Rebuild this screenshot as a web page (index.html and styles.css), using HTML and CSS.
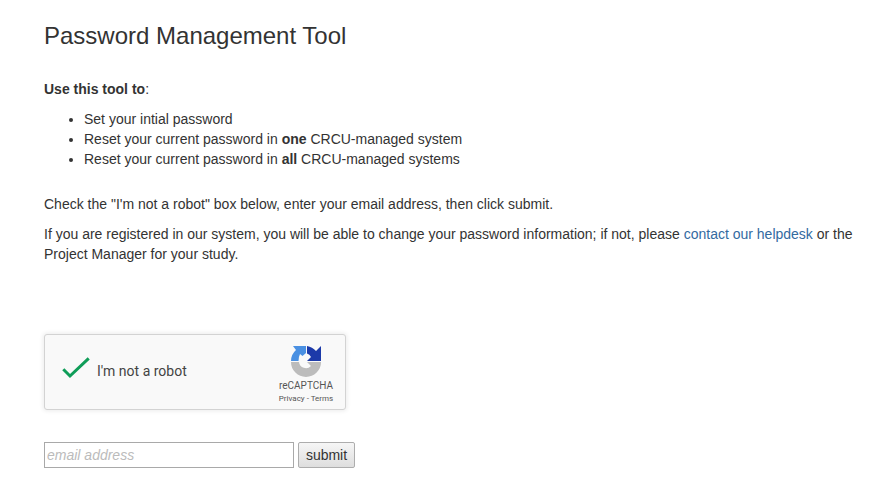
FILE: index.html
```
<!DOCTYPE html>
<html lang="en">
<head>
<meta charset="utf-8">
<title>Password Management Tool</title>
<link rel="stylesheet" href="styles.css">
</head>
<body>
<main class="page">
  <h3 class="title">Password Management Tool</h3>
  <p class="intro"><strong>Use this tool to</strong>:</p>
  <ul class="uses">
    <li>Set your intial password</li>
    <li>Reset your current password in <strong>one</strong> CRCU-managed system</li>
    <li>Reset your current password in <strong>all</strong> CRCU-managed systems</li>
  </ul>
  <p class="para">Check the "I'm not a robot" box below, enter your email address, then click submit.</p>
  <p class="para">If you are registered in our system, you will be able to change your password information; if not, please <a href="#">contact our helpdesk</a> or the Project Manager for your study.</p>
  <div class="captcha">
    <svg class="check" width="30" height="24" viewBox="0 0 30 24" aria-hidden="true">
      <path d="M2.3 13.3 L9 20 L27.7 2.3" fill="none" stroke="#0f9d58" stroke-width="3"/>
    </svg>
    <span class="captcha-label">I'm not a robot</span>
    <div class="captcha-brand">
      <svg class="logo" width="30" height="33" viewBox="5 4 30 33" aria-hidden="true">
        <path d="M5 20 A15 15 0 0 1 10 9 L7 5 L20 5 L20 12 L16.5 15 L14 13 Q12.5 16 12.5 20 Z" fill="#4a90e2"/>
        <path d="M21 5 A15 15 0 0 1 30 10 L35 5 L35 20 L21 20 L25 16 A7 7 0 0 0 21 12.5 Z" fill="#1c3aa9"/>
        <path d="M5 21 L13 21 A7 7 0 0 0 25 25 L21 21 L35 21 A15 15 0 0 1 5 21 Z" fill="#bcbcbc"/>
      </svg>
      <span class="brand-name">reCAPTCHA</span>
      <span class="brand-links">Privacy - Terms</span>
    </div>
  </div>
  <form class="email-form" onsubmit="return false">
    <input class="email" type="text" placeholder="email address">
    <button class="submit" type="submit">submit</button>
  </form>
</main>
</body>
</html>
```
FILE: styles.css
```
* { box-sizing: border-box; }
html, body { margin: 0; background: #fff; }
body {
  font-family: "Liberation Sans", Arial, sans-serif;
  font-size: 14px;
  line-height: 20px;
  color: #333;
}
.page { padding: 23px 14px 0 44px; }
.title {
  margin: 0 0 30px;
  font-size: 24px;
  font-weight: 500;
  line-height: 26.4px;
}
.intro { margin: 0 0 10px; }
.uses { margin: 0 0 25px; padding-left: 40px; }
.para { margin: 0 0 10px; }
a { color: #336a9f; text-decoration: none; }
.captcha {
  display: flex;
  align-items: center;
  width: 302px;
  height: 76px;
  margin-top: 70px;
  background: #f9f9f9;
  border: 1px solid #d3d3d3;
  border-radius: 3px;
  box-shadow: 0 0 4px 1px rgba(0, 0, 0, 0.08);
  font-family: Roboto, "Liberation Sans", sans-serif;
}
.check { margin-left: 16px; margin-bottom: 8px; flex: none; }
.captcha-label { margin-left: 6px; margin-bottom: 2px; font-size: 14px; color: #444; }
.captcha-brand {
  display: flex;
  flex-direction: column;
  align-items: center;
  align-self: flex-start;
  margin-left: auto;
  width: 70px;
  margin-right: 4px;
  padding-top: 10px;
  color: #555;
}
.logo { margin-bottom: 1px; }
.brand-name { font-size: 10px; line-height: 13px; }
.brand-links { font-size: 8px; line-height: 13px; }
.email-form { display: flex; align-items: stretch; gap: 4px; margin-top: 32px; }
.email {
  width: 250px;
  height: 26px;
  padding: 1px 2px;
  border: 1px solid #a9a9a9;
  background: #fff;
  font: 14px/20px "Liberation Sans", Arial, sans-serif;
  color: #333;
}
.email::placeholder { color: #bbb; font-style: italic; opacity: 1; }
.submit {
  width: 57px;
  height: 26px;
  padding: 0;
  border: 1px solid #adadad;
  border-radius: 2px;
  background: linear-gradient(#f6f6f6, #dedede);
  font: 14px/20px "Liberation Sans", Arial, sans-serif;
  color: #333;
}
```
